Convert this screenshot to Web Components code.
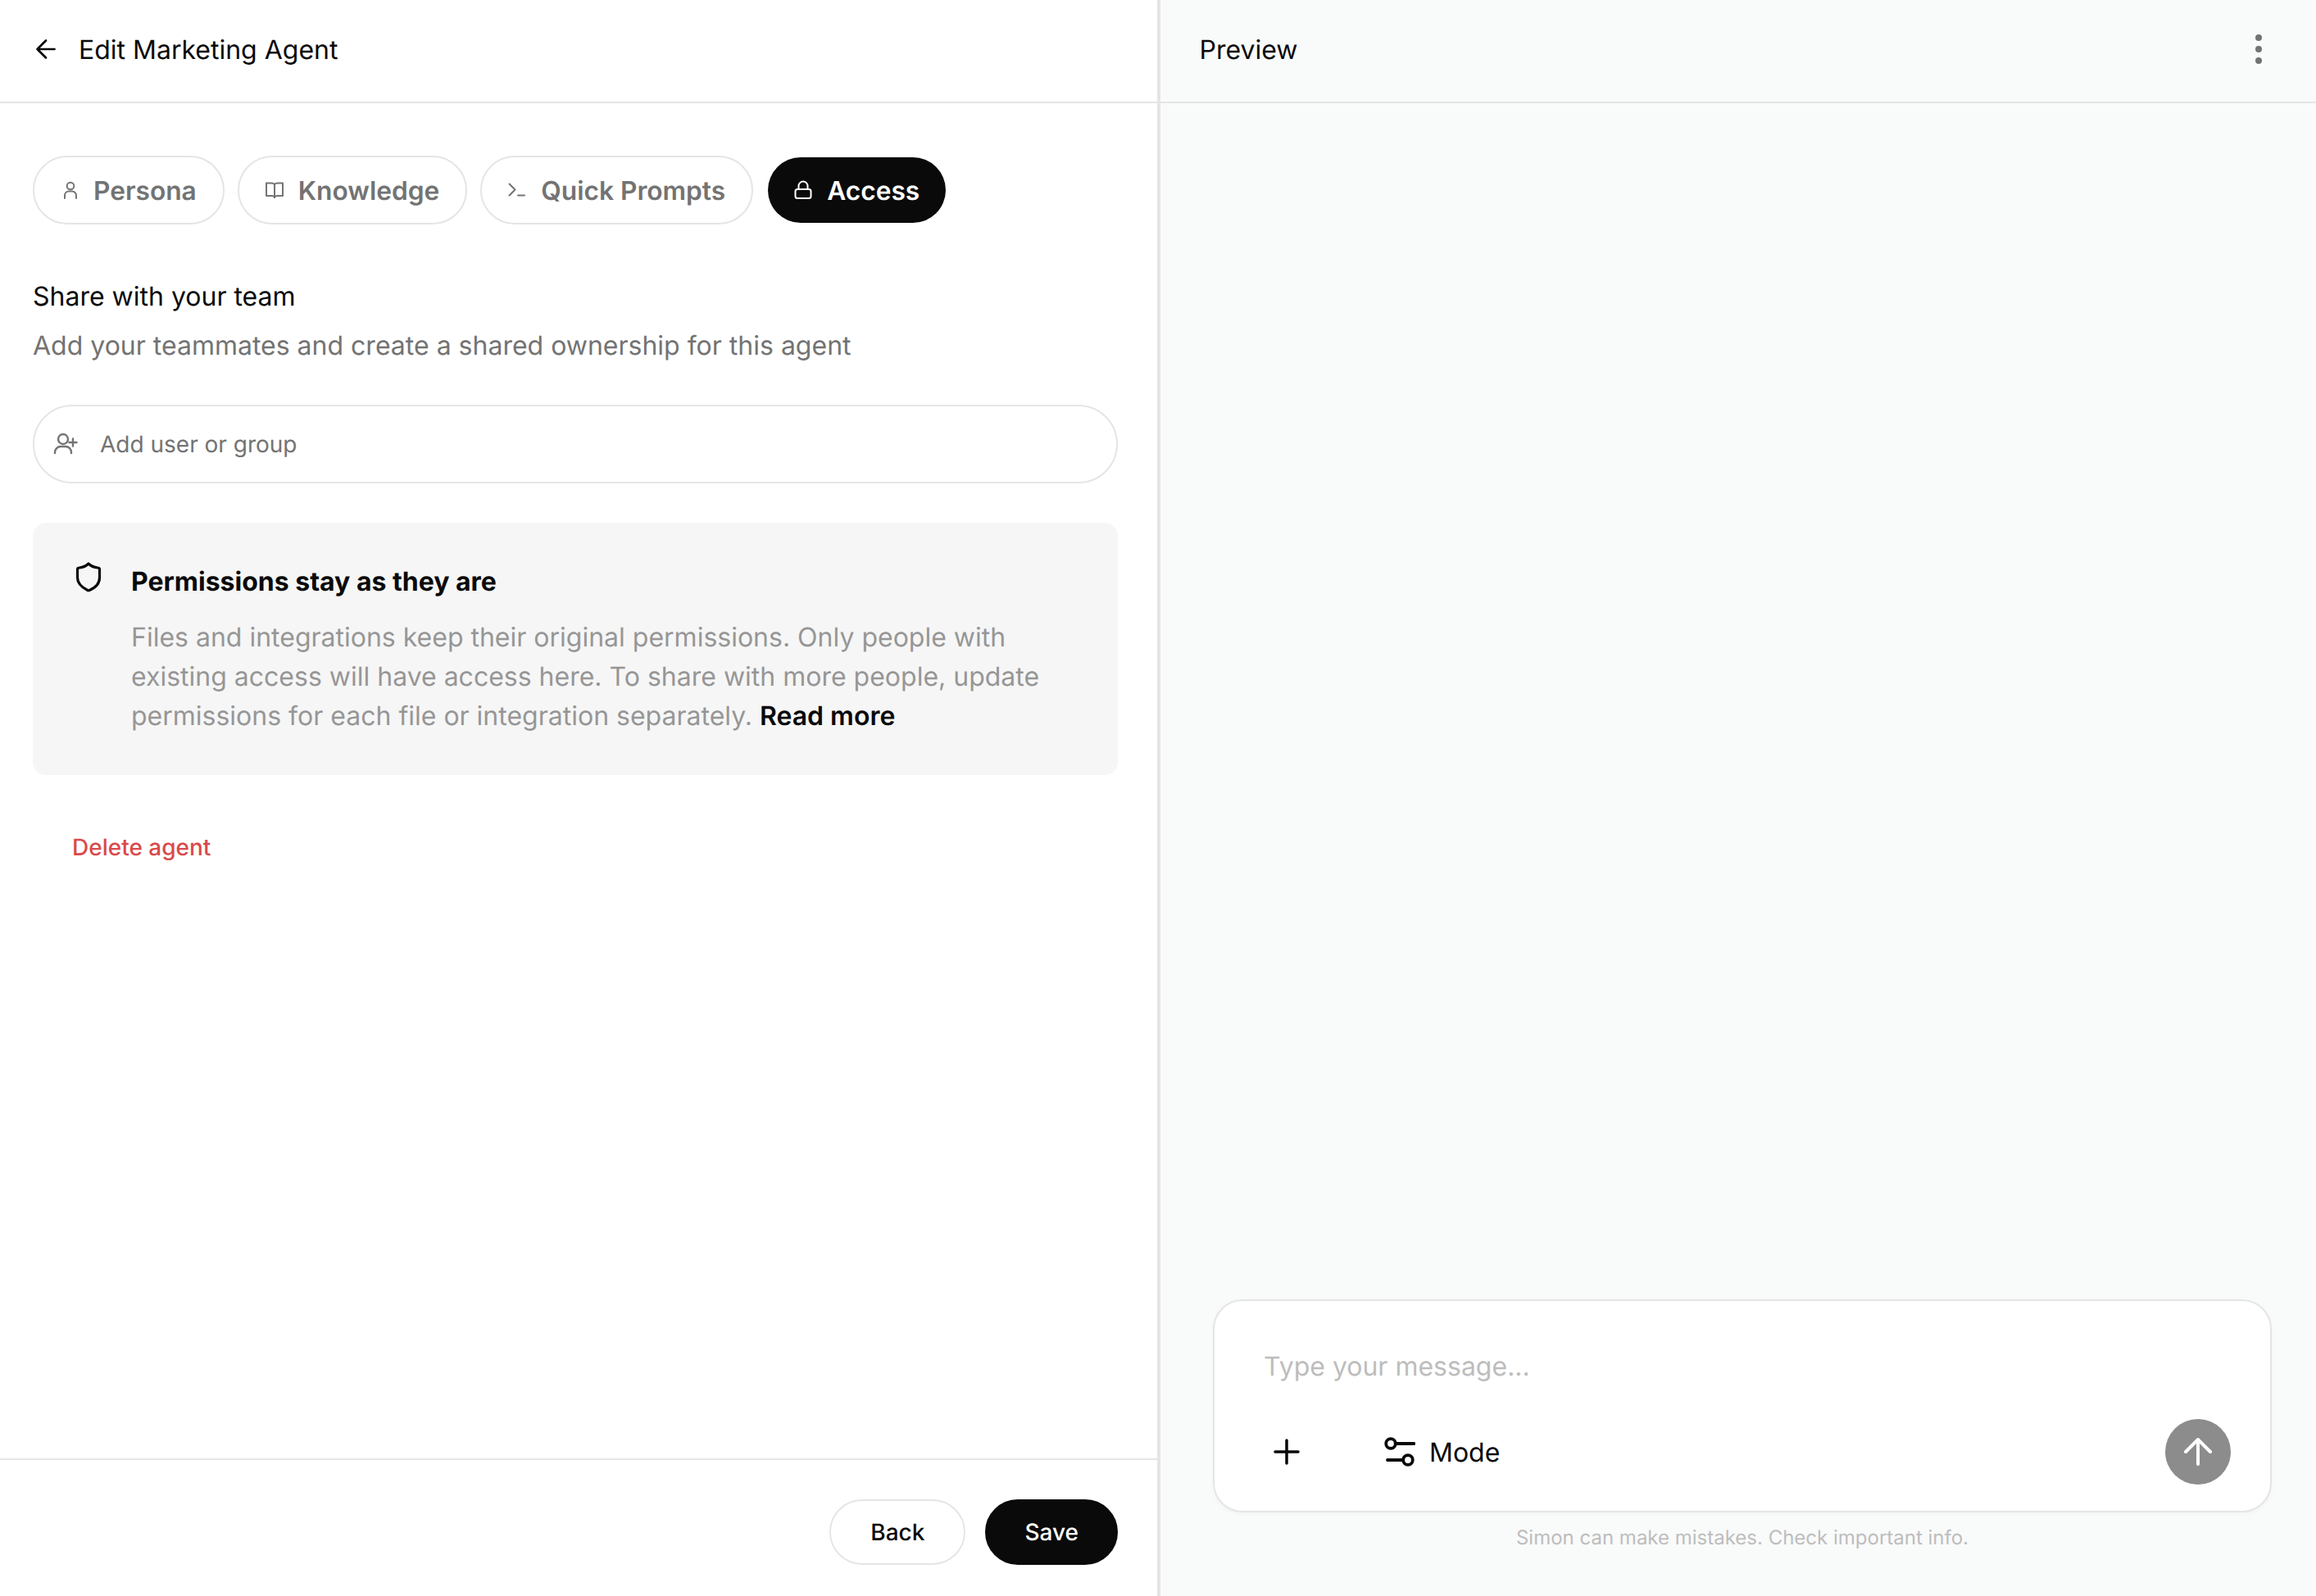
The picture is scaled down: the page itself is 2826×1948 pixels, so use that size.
<!DOCTYPE html>
<html>
<head>
<meta charset="utf-8">
<title>Edit Marketing Agent</title>
<style>
  html, body { margin: 0; height: 100%; }
  body { font-family: Inter, "Liberation Sans", sans-serif; color: #0a0a0a; background: #fff; text-rendering: geometricPrecision; }
</style>
</head>
<body>
<agent-page>
  <edit-pane slot="edit" heading="Edit Marketing Agent">
    <tab-chip icon="user">Persona</tab-chip>
    <tab-chip icon="book">Knowledge</tab-chip>
    <tab-chip icon="terminal">Quick Prompts</tab-chip>
    <tab-chip icon="lock" active>Access</tab-chip>

    <share-form slot="body" heading="Share with your team" description="Add your teammates and create a shared ownership for this agent" placeholder="Add user or group"></share-form>
    <notice-card slot="body" heading="Permissions stay as they are">
      Files and integrations keep their original permissions. Only people with existing access will have access here. To share with more people, update permissions for each file or integration separately. <b>Read more</b>
    </notice-card>
    <delete-link slot="body">Delete agent</delete-link>

    <pill-button slot="footer">Back</pill-button>
    <pill-button slot="footer" primary>Save</pill-button>
  </edit-pane>
  <preview-pane slot="preview" heading="Preview">
    <chat-composer placeholder="Type your message..." note="Simon can make mistakes. Check important info."></chat-composer>
  </preview-pane>
</agent-page>

<script>
const ICONS = {
  user: '<circle cx="14" cy="8" r="4.3"/><path d="M7 23v-3.500a5 5 0 0 1 5-5h4a5 5 0 0 1 5 5V23"/>',
  book: '<path d="M13 6c-1-1-2-1.500-3.500-1.500H3V20h6.500c1.500 0 3 .5 3.500 2 .5-1.500 2-2 3.500-2H23V4.500h-6.500C15 4.500 14 5 13 6z"/><path d="M13 6v16"/>',
  terminal: '<path d="M3.500 5.500l7 7-7 7"/><path d="M14 19.500h8"/>',
  lock: '<rect x="3.500" y="12" width="19" height="11" rx="2.500"/><path d="M7.500 12V8a5.500 5.500 0 0 1 11 0v4"/>'
};

class AgentPage extends HTMLElement {
  constructor() {
    super();
    this.attachShadow({ mode: 'open' });
    this.shadowRoot.innerHTML = `
      <style>
        :host { display: flex; width: 2826px; height: 1948px; overflow: hidden; }
        ::slotted([slot="edit"]) { width: 1416px; flex: none; }
        ::slotted([slot="preview"]) { flex: 1; min-width: 0; }
      </style>
      <slot name="edit"></slot>
      <slot name="preview"></slot>
    `;
  }
}

class EditPane extends HTMLElement {
  constructor() {
    super();
    this.attachShadow({ mode: 'open' });
    this.shadowRoot.innerHTML = `
      <style>
        :host { display: flex; flex-direction: column; box-sizing: border-box; border-right: 4px solid #e5e5e5; background: #fff; }
        header { display: flex; align-items: center; gap: 22px; height: 120px; padding: 0 0 4px 38px; border-bottom: 2px solid #e5e5e5; font-size: 32px; flex: none; }
        svg { width: 36px; height: 36px; fill: none; stroke: #0a0a0a; stroke-width: 1.8; stroke-linecap: round; stroke-linejoin: round; }
        .tabs { display: flex; gap: 16px; padding: 64px 40px 0; }
        .body { flex: 1; padding: 0 48px 0 40px; }
        footer { display: flex; justify-content: flex-end; gap: 24px; height: 168px; box-sizing: border-box; padding: 48px 48px 0 0; border-top: 2px solid #e5e5e5; flex: none; }
      </style>
      <header>
        <svg viewBox="0 0 24 24"><path d="M19 12H5M12 19l-7-7 7-7"/></svg>
        <span class="heading"></span>
      </header>
      <div class="tabs"><slot></slot></div>
      <div class="body"><slot name="body"></slot></div>
      <footer><slot name="footer"></slot></footer>
    `;
  }

  connectedCallback() {
    this.shadowRoot.querySelector('.heading').textContent = this.getAttribute('heading');
  }
}

class TabChip extends HTMLElement {
  constructor() {
    super();
    this.attachShadow({ mode: 'open' });
    this.shadowRoot.innerHTML = `
      <style>
        :host { display: flex; align-items: center; gap: 16px; box-sizing: border-box; height: 84px; padding: 0 32px 0 30px; border: 2px solid #e5e5e5; border-radius: 42px; font-size: 31.7px; font-weight: 560; color: #737373; white-space: nowrap; }
        :host([active]) { background: #0a0a0a; background-clip: padding-box; border-color: transparent; color: #fff; }
        svg { width: 26px; height: 26px; fill: none; stroke: currentColor; stroke-width: 2; stroke-linecap: round; stroke-linejoin: round; flex: none; }
      </style>
      <svg viewBox="0 0 26 26"></svg>
      <slot></slot>
    `;
  }

  connectedCallback() {
    this.shadowRoot.querySelector('svg').innerHTML = ICONS[this.getAttribute('icon')];
  }
}

class ShareForm extends HTMLElement {
  constructor() {
    super();
    this.attachShadow({ mode: 'open' });
    this.shadowRoot.innerHTML = `
      <style>
        :host { display: block; padding-top: 64px; }
        h2 { margin: 0 0 12px; font-size: 32px; line-height: 48px; font-weight: 400; }
        p { margin: 0; font-size: 32px; line-height: 48px; color: #737373; }
        .field { display: flex; align-items: center; gap: 26px; box-sizing: border-box; height: 96px; margin-top: 48px; padding-left: 20px; border: 2px solid #e5e5e5; border-radius: 48px; font-size: 28px; color: #737373; }
        svg { width: 34px; height: 34px; fill: none; stroke: #737373; stroke-width: 2.4; stroke-linecap: round; stroke-linejoin: round; flex: none; }
      </style>
      <h2></h2>
      <p></p>
      <div class="field">
        <svg viewBox="0 0 34 34"><circle cx="15" cy="11" r="6"/><path d="M5 28v-1a7 7 0 0 1 7-7h6a7 7 0 0 1 7 7v1"/><path d="M22.500 15h9M27 10.500v9"/></svg>
        <span class="hint"></span>
      </div>
    `;
  }

  connectedCallback() {
    this.shadowRoot.querySelector('h2').textContent = this.getAttribute('heading');
    this.shadowRoot.querySelector('p').textContent = this.getAttribute('description');
    this.shadowRoot.querySelector('.hint').textContent = this.getAttribute('placeholder');
  }
}

class NoticeCard extends HTMLElement {
  constructor() {
    super();
    this.attachShadow({ mode: 'open' });
    this.shadowRoot.innerHTML = `
      <style>
        :host { display: flex; gap: 32px; margin-top: 48px; padding: 48px; background: #f6f6f6; border-radius: 16px; }
        svg { width: 40px; height: 44px; margin-top: -4px; fill: none; stroke: #0a0a0a; stroke-width: 3.2; stroke-linejoin: round; flex: none; }
        h3 { margin: 0 0 20px; font-size: 32px; line-height: 48px; font-weight: 700; }
        .text { font-size: 32px; line-height: 48px; color: #969696; }
        ::slotted(b) { font-weight: 600; color: #0a0a0a; }
      </style>
      <svg viewBox="0 0 40 44"><path d="M20 6c3 3 7 4.500 11.500 5q2 0 2 2v10c0 8-6.500 13-12.500 15.500q-1 .5-2 0C13 35.500 6.500 31 6.500 23V13q0-2 2-2C13 10.500 17 9 20 6z"/></svg>
      <div>
        <h3></h3>
        <div class="text"><slot></slot></div>
      </div>
    `;
  }

  connectedCallback() {
    this.shadowRoot.querySelector('h3').textContent = this.getAttribute('heading');
  }
}

class DeleteLink extends HTMLElement {
  constructor() {
    super();
    this.attachShadow({ mode: 'open' });
    this.shadowRoot.innerHTML = `
      <style>
        :host { display: block; margin: 68px 0 0 48px; font-size: 28px; line-height: 40px; font-weight: 500; color: #d94a4a; }
      </style>
      <slot></slot>
    `;
  }
}

class PillButton extends HTMLElement {
  constructor() {
    super();
    this.attachShadow({ mode: 'open' });
    this.shadowRoot.innerHTML = `
      <style>
        :host { display: flex; align-items: center; box-sizing: border-box; height: 80px; padding: 0 48px; border: 2px solid #e5e5e5; border-radius: 40px; font-size: 28px; font-weight: 500; color: #0a0a0a; }
        :host([primary]) { padding: 0 46px; background: #0a0a0a; border-color: #0a0a0a; color: #fff; }
      </style>
      <slot></slot>
    `;
  }
}

class PreviewPane extends HTMLElement {
  constructor() {
    super();
    this.attachShadow({ mode: 'open' });
    this.shadowRoot.innerHTML = `
      <style>
        :host { display: flex; flex-direction: column; background: #f9fafa; }
        header { display: flex; align-items: center; justify-content: space-between; flex: none; height: 120px; padding: 0 66px 4px 47.5px; border-bottom: 2px solid #e5e5e5; font-size: 32px; }
        svg { width: 8px; height: 36px; fill: #737373; }
        .main { flex: 1; display: flex; flex-direction: column; justify-content: flex-end; padding: 0 54px 53px 64px; }
      </style>
      <header>
        <span class="heading"></span>
        <svg viewBox="0 0 8 36"><circle cx="4" cy="4" r="4"/><circle cx="4" cy="18" r="4"/><circle cx="4" cy="32" r="4"/></svg>
      </header>
      <div class="main"><slot></slot></div>
    `;
  }

  connectedCallback() {
    this.shadowRoot.querySelector('.heading').textContent = this.getAttribute('heading');
  }
}

class ChatComposer extends HTMLElement {
  constructor() {
    super();
    this.attachShadow({ mode: 'open' });
    this.shadowRoot.innerHTML = `
      <style>
        :host { display: block; }
        .box { box-sizing: border-box; height: 260px; padding: 56px 48px 0 60px; background: #fff; border: 2px solid #e5e5e5; border-radius: 36px; box-shadow: 0 2px 6px rgba(0,0,0,.03); }
        .hint { font-size: 32px; line-height: 48px; color: #bdbdbd; }
        .row { display: flex; align-items: center; height: 80px; margin-top: 40px; padding-left: 12px; }
        .plus { width: 32px; height: 32px; fill: none; stroke: #0a0a0a; stroke-width: 3.500; stroke-linecap: round; flex: none; }
        .mode { display: flex; align-items: center; gap: 17px; margin-left: 103px; font-size: 32px; color: #0a0a0a; }
        .mode svg { width: 38px; height: 38px; fill: none; stroke: #0a0a0a; stroke-width: 3.800; stroke-linecap: round; flex: none; }
        .send { width: 80px; height: 80px; margin-left: auto; flex: none; }
        .note { margin-top: 13px; font-size: 24px; line-height: 36px; text-align: center; color: #bdbdbd; }
      </style>
      <div class="box">
        <div class="hint"></div>
        <div class="row">
          <svg class="plus" viewBox="0 0 32 32"><path d="M2 16h28M16 2v28"/></svg>
          <div class="mode">
            <svg viewBox="0 0 38 38"><circle cx="8" cy="9" r="5.800"/><path d="M14 9h22.500"/><path d="M4 29h18"/><circle cx="29" cy="29" r="5.800"/></svg>
            <span>Mode</span>
          </div>
          <svg class="send" viewBox="0 0 80 80"><circle cx="40" cy="40" r="40" fill="#8c8c8c"/><path d="M40 55V25M25 40l15-15 15 15" fill="none" stroke="#fff" stroke-width="4" stroke-linecap="round" stroke-linejoin="round"/></svg>
        </div>
      </div>
      <div class="note"></div>
    `;
  }

  connectedCallback() {
    this.shadowRoot.querySelector('.hint').textContent = this.getAttribute('placeholder');
    this.shadowRoot.querySelector('.note').textContent = this.getAttribute('note');
  }
}

customElements.define('agent-page', AgentPage);
customElements.define('edit-pane', EditPane);
customElements.define('tab-chip', TabChip);
customElements.define('share-form', ShareForm);
customElements.define('notice-card', NoticeCard);
customElements.define('delete-link', DeleteLink);
customElements.define('pill-button', PillButton);
customElements.define('preview-pane', PreviewPane);
customElements.define('chat-composer', ChatComposer);
</script>
</body>
</html>
